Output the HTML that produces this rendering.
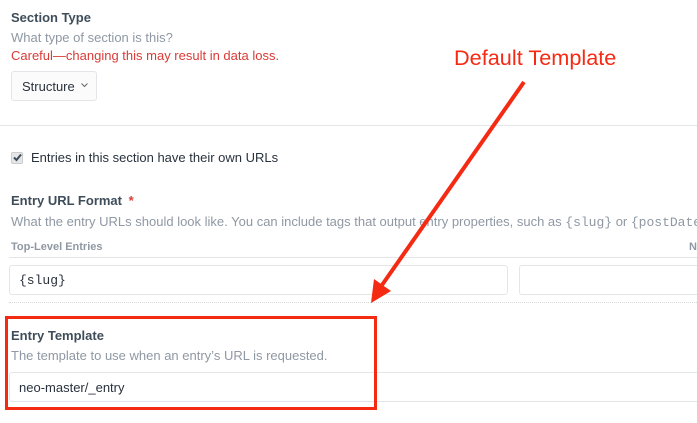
<!DOCTYPE html>
<html><head><style>
body{margin:0;width:697px;height:423px;overflow:hidden;background:#fff;font-family:"Liberation Sans",sans-serif;position:relative}
div,span{position:absolute;white-space:nowrap}
.h{font-weight:bold;font-size:13px;color:#3f4d5a}
.t{font-size:13px;color:#8f98a3}
.in{border:1px solid #e3e5e8;border-radius:3px;background:#fff;box-sizing:border-box}
.m{font-family:"Liberation Mono",monospace}
</style></head><body>
<div class="h" style="left:11px;top:10px">Section Type</div>
<div class="t" style="left:11px;top:30px">What type of section is this?</div>
<div style="left:11px;top:48px;font-size:13px;color:#da3b36">Careful—changing this may result in data loss.</div>
<div class="in" style="left:11px;top:71px;width:86px;height:30px;background:#fbfbfb;font-size:13px;color:#29323d;padding:7px 0 0 10px">Structure</div>
<svg style="position:absolute;left:81px;top:83px" width="7" height="5"><path d="M0.5 0.5 L3.5 3.5 L6.5 0.5" stroke="#666" stroke-width="1" fill="none"/></svg>
<div style="left:0;top:125px;width:697px;height:1px;background:#e3e5e8"></div>
<div style="left:11px;top:152px;width:12px;height:12px;border-radius:2px;background:#e4e6e8;border:1px solid #ccc;box-sizing:border-box"></div>
<svg style="position:absolute;left:12px;top:152px" width="11" height="11"><path d="M2 5.5 L4.5 8 L9 2.5" stroke="#3f4d5a" stroke-width="2" fill="none"/></svg>
<div style="left:31px;top:150px;font-size:13px;color:#29323d">Entries in this section have their own URLs</div>
<div class="h" style="left:11px;top:193px">Entry URL Format <span style="position:static;color:#da3b36;margin-left:3px">*</span></div>
<div class="t" style="left:11px;top:214px">What the entry URLs should look like. You can include tags that output entry properties, such as <span class="m" style="position:static">{slug}</span> or <span class="m" style="position:static">{postDate</span></div>
<div style="left:11px;top:241px;font-size:11px;font-weight:bold;color:#8f98a3">Top-Level Entries</div>
<div style="left:689px;top:241px;font-size:11px;font-weight:bold;color:#8f98a3">N</div>
<div style="left:9px;top:257px;width:688px;height:1px;background:#e3e5e8"></div>
<div class="in m" style="left:9px;top:265px;width:499px;height:30px;font-size:13px;color:#29323d;padding:7px 0 0 9px">{slug}</div>
<div class="in" style="left:519px;top:265px;width:190px;height:30px"></div>
<div style="left:9px;top:302px;width:688px;border-top:1px dotted #d8dadd"></div>
<div class="h" style="left:11px;top:328px">Entry Template</div>
<div class="t" style="left:11px;top:348px">The template to use when an entry’s URL is requested.</div>
<div class="in" style="left:9px;top:372px;width:700px;height:30px;font-size:13px;color:#29323d;padding:7px 0 0 9px">neo-master/_entry</div>
<div style="left:5px;top:316px;width:372px;height:94px;border:3px solid #f52a13;box-sizing:border-box"></div>
<div style="left:454px;top:45px;font-size:21.7px;color:#f52a13">Default Template</div>
<svg style="position:absolute;left:0;top:0" width="697" height="423"><line x1="524" y1="82" x2="382" y2="285" stroke="#f52a13" stroke-width="4"/><polygon points="371,303 374,279 391,291" fill="#f52a13"/></svg>
</body></html>
